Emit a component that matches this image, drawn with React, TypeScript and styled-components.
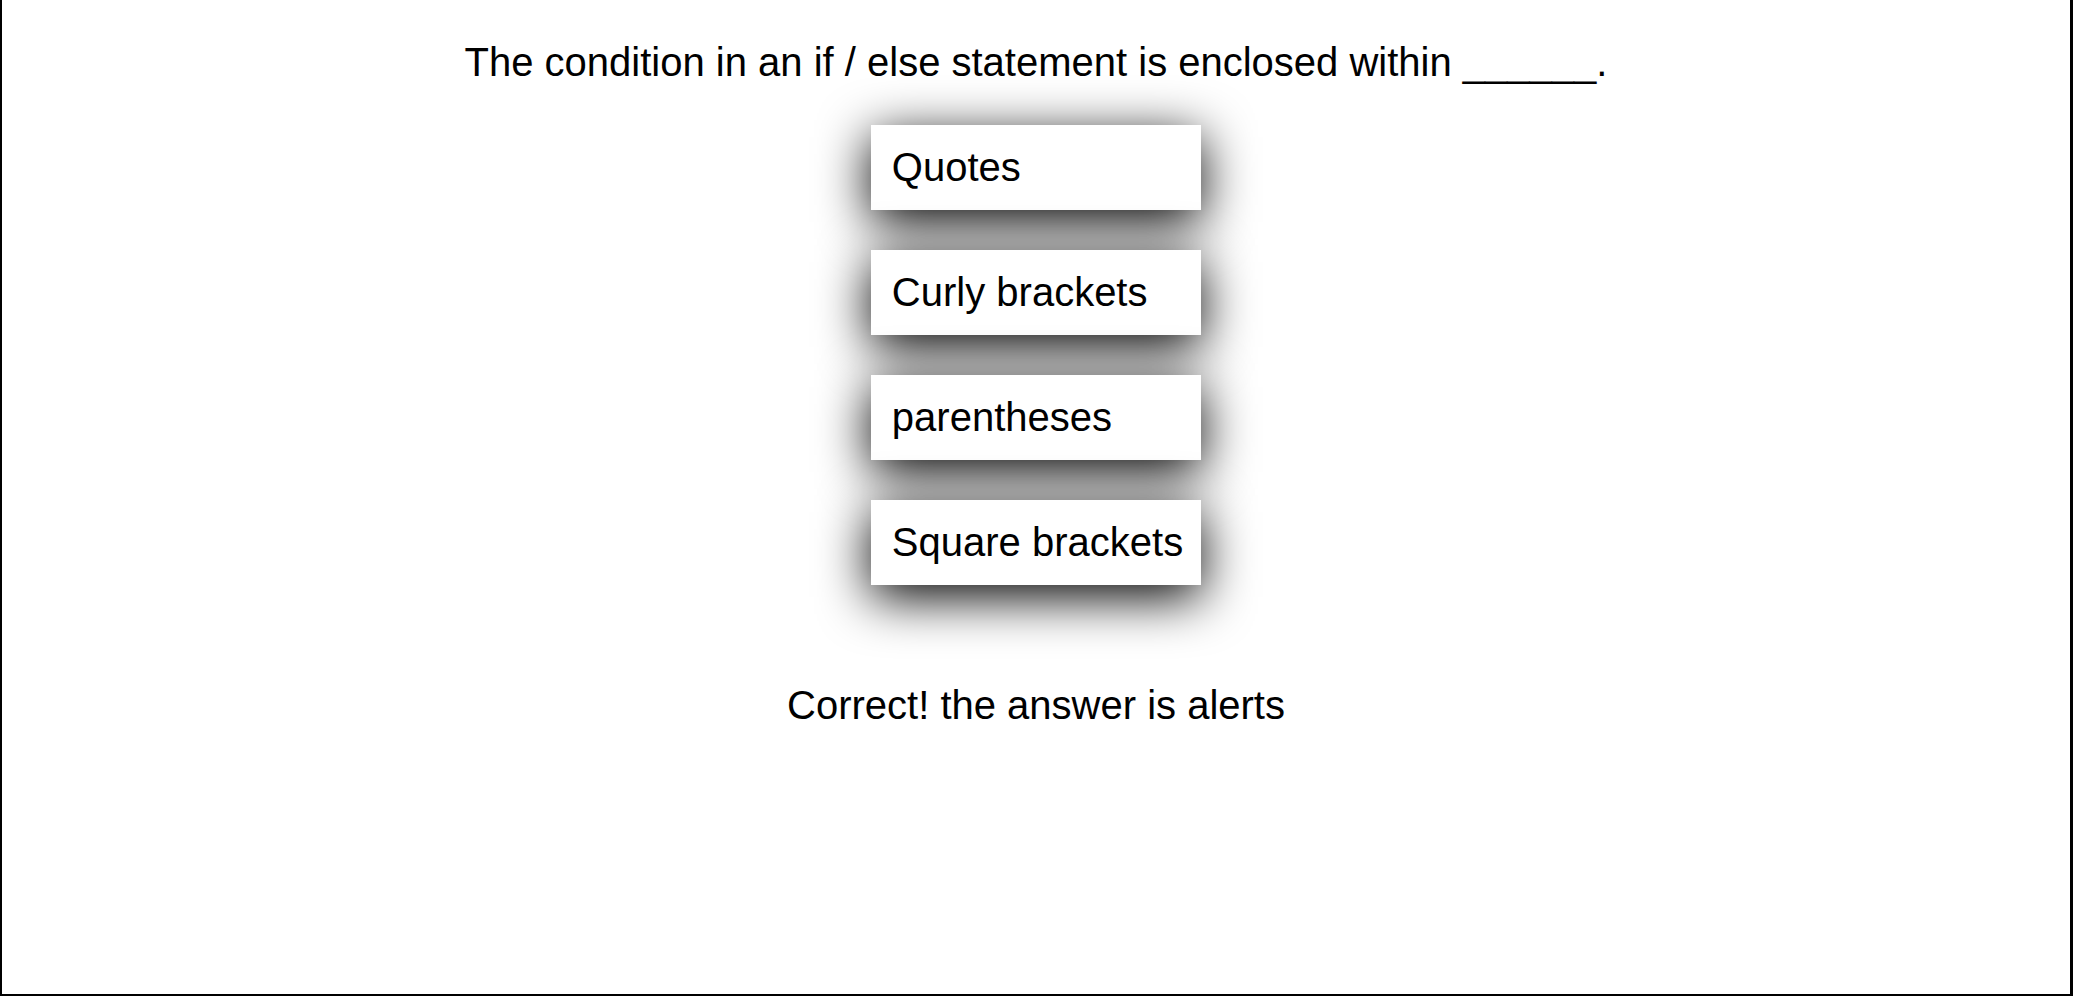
import React from "react";
import styled, { createGlobalStyle } from "styled-components";

const Global = createGlobalStyle`
  html, body {
    margin: 0;
    padding: 0;
    background: #ffffff;
  }
  body {
    font-family: "Liberation Sans", Arial, Helvetica, sans-serif;
    color: #000000;
  }
`;

const Frame = styled.main`
  box-sizing: border-box;
  width: 2073px;
  height: 996px;
  border-left: 2px solid #000;
  border-right: 3px solid #000;
  border-bottom: 2px solid #000;
  display: flex;
  flex-direction: column;
  align-items: center;
  padding-top: 39px;
`;

const Question = styled.h2`
  margin: 0;
  font-size: 40px;
  line-height: 46px;
  font-weight: 400;
  text-align: center;
`;

const Choices = styled.div`
  display: flex;
  flex-direction: column;
  align-items: stretch;
  gap: 40px;
  margin-top: 40px;
`;

const Choice = styled.button`
  display: block;
  border: none;
  background: #ffffff;
  font-family: "Liberation Sans", Arial, Helvetica, sans-serif;
  font-size: 40px;
  line-height: 46px;
  color: #000;
  text-align: left;
  padding: 19px 18px 20px 21px;
  box-shadow: 0 12px 52px rgba(0, 0, 0, 1);
  cursor: pointer;
`;

const Feedback = styled.p`
  margin: 97px 0 0;
  font-size: 40px;
  line-height: 46px;
  text-align: center;
`;

const choices = ["Quotes", "Curly brackets", "parentheses", "Square brackets"];

export default function App() {
  return (
    <>
      <Global />
      <Frame>
        <Question>The condition in an if / else statement is enclosed within ______.</Question>
        <Choices>
          {choices.map((c) => (
            <Choice key={c}>{c}</Choice>
          ))}
        </Choices>
        <Feedback>Correct! the answer is alerts</Feedback>
      </Frame>
    </>
  );
}
